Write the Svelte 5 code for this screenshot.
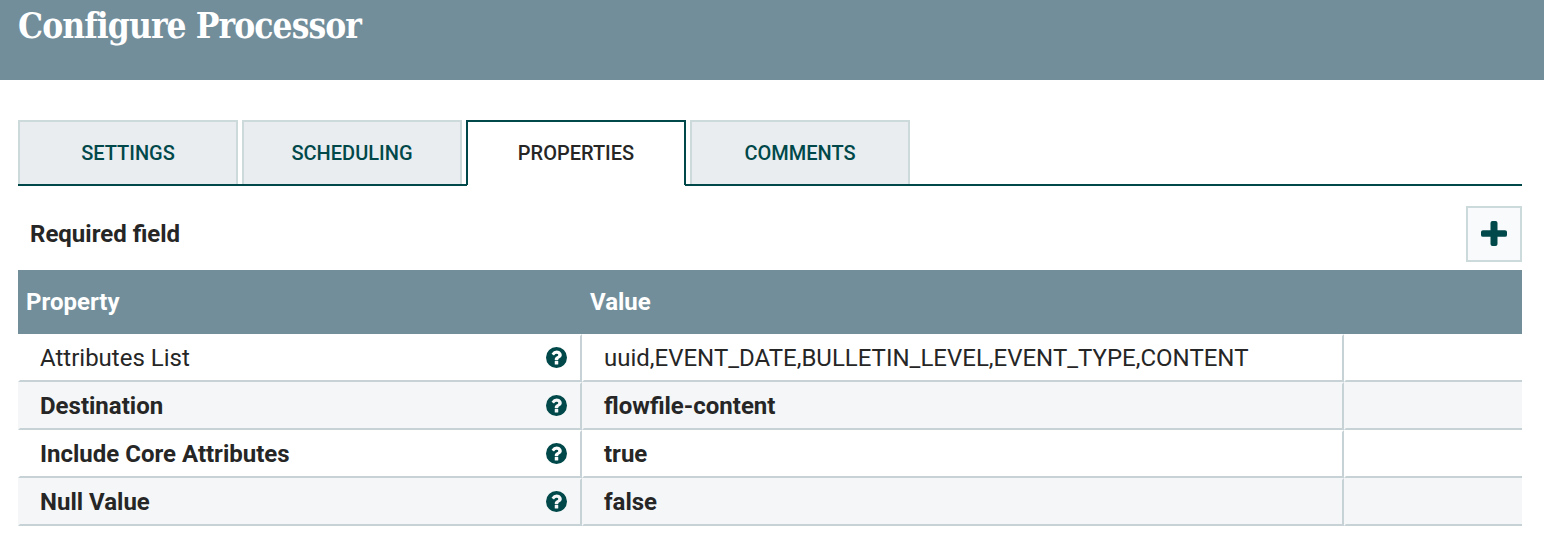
<script>
  const tabs = ['SETTINGS', 'SCHEDULING', 'PROPERTIES', 'COMMENTS'];
  const active = 'PROPERTIES';
  const rows = [
    { name: 'Attributes List', value: 'uuid,EVENT_DATE,BULLETIN_LEVEL,EVENT_TYPE,CONTENT', required: false },
    { name: 'Destination', value: 'flowfile-content', required: true },
    { name: 'Include Core Attributes', value: 'true', required: true },
    { name: 'Null Value', value: 'false', required: true }
  ];
</script>

<div class="dialog">
  <header><h1>Configure Processor</h1></header>
  <main>
    <nav>
      {#each tabs as tab}
        <div class="tab" class:active={tab === active}><span>{tab}</span></div>
      {/each}
    </nav>
    <div class="bar">
      <span class="required">Required field</span>
      <button aria-label="Add property">
        <svg width="26" height="25" viewBox="0 0 26 26" preserveAspectRatio="none"><path d="M11.5 0h3a2 2 0 0 1 2 2v7.500H24a2 2 0 0 1 2 2v3a2 2 0 0 1-2 2h-7.500V24a2 2 0 0 1-2 2h-3a2 2 0 0 1-2-2v-7.500H2a2 2 0 0 1-2-2v-3a2 2 0 0 1 2-2h7.500V2a2 2 0 0 1 2-2z" fill="#004849" /></svg>
      </button>
    </div>
    <section class="table">
      <div class="row head"><div>Property</div><div>Value</div><div></div></div>
      {#each rows as row}
        <div class="row body" class:bold={row.required}>
          <div class="cell name">
            <span>{row.name}</span>
            <svg width="21" height="21" viewBox="0 0 1536 1536"><path fill="#004849" fill-rule="evenodd" d="M1536 768a768 768 0 1 1-1536 0a768 768 0 1 1 1536 0zM896 1248v-192q0-14-9-23t-23-9H672q-14 0-23 9t-9 23v192q0 14 9 23t23 9h192q14 0 23-9t9-23zM1152 576q0-88-55.500-163T958 297t-170-41q-243 0-371 213-15 24 8 42l132 100q7 6 19 6 16 0 25-12 53-68 86-92 34-24 86-24 48 0 85.500 26t37.500 59q0 38-20 61t-68 45q-63 28-115.500 86.500T640 892v36q0 14 9 23t23 9h192q14 0 23-9t9-23q0-19 21.500-49.500T972 829q32-18 49-28.500t46-35 44.500-48 28-60.500 12.500-81z" /></svg>
          </div>
          <div class="cell value">{row.value}</div>
          <div class="cell actions"></div>
        </div>
      {/each}
    </section>
  </main>
</div>

<style>
  :global(body) { background: #fff; }
  .dialog { height: 554px; font-family: Roboto, sans-serif; color: #262626; overflow: hidden; }
  header { height: 80px; background: #728e9b; padding-left: 18px; box-sizing: border-box; }
  h1 { margin: 0; padding-top: 2px; font: 700 35px/48px "Roboto Slab", "DejaVu Serif Condensed", "DejaVu Serif", serif; font-stretch: condensed; letter-spacing: -0.92px; color: #fff; white-space: nowrap; }
  main { padding: 40px 22px 0 18px; }
  nav { display: flex; gap: 4px; height: 66px; box-sizing: border-box; border-bottom: 2px solid #004849; }
  .tab { width: 220px; height: 64px; box-sizing: border-box; border: 2px solid #ccdadb; border-bottom: 0; background: #e9edf0; color: #004849; font-size: 20px; font-weight: 500; line-height: 62px; text-align: center; }
  .tab.active { position: relative; height: 66px; background: #fff; border-color: #004849; color: #262626; }
  .tab.active::after { content: ""; position: absolute; left: -1px; right: -1px; bottom: 0; height: 1px; background: #fff; }
  .bar { display: flex; justify-content: space-between; margin-top: 20px; height: 64px; }
  .required { padding-left: 12px; line-height: 56px; font-size: 24px; font-weight: 700; }
  button { width: 56px; height: 56px; border: 2px solid #ccdadb; background: #f9fafb; padding: 0 0 1px; display: grid; place-items: center; }
  .row { display: grid; grid-template-columns: 564px 762px 178px; font-size: 24px; }
  .head { height: 64px; background: #728e9b; color: #fff; font-weight: 700; line-height: 64px; }
  .head div { padding-left: 8px; }
  .body { height: 48px; background: #fff; }
  .body:nth-child(odd) { background: #f4f6f7; }
  .cell { box-sizing: border-box; height: 48px; line-height: 44px; border: 2px solid transparent; border-right-color: #c7d2d7; border-bottom-color: #c7d2d7; white-space: nowrap; }
  .name { display: flex; justify-content: space-between; align-items: center; padding: 0 13px 0 20px; }
  .name svg { margin-top: -1px; }
  .value { padding-left: 20px; }
  .actions { border-right: 0; }
  .bold { font-weight: 700; }
</style>
